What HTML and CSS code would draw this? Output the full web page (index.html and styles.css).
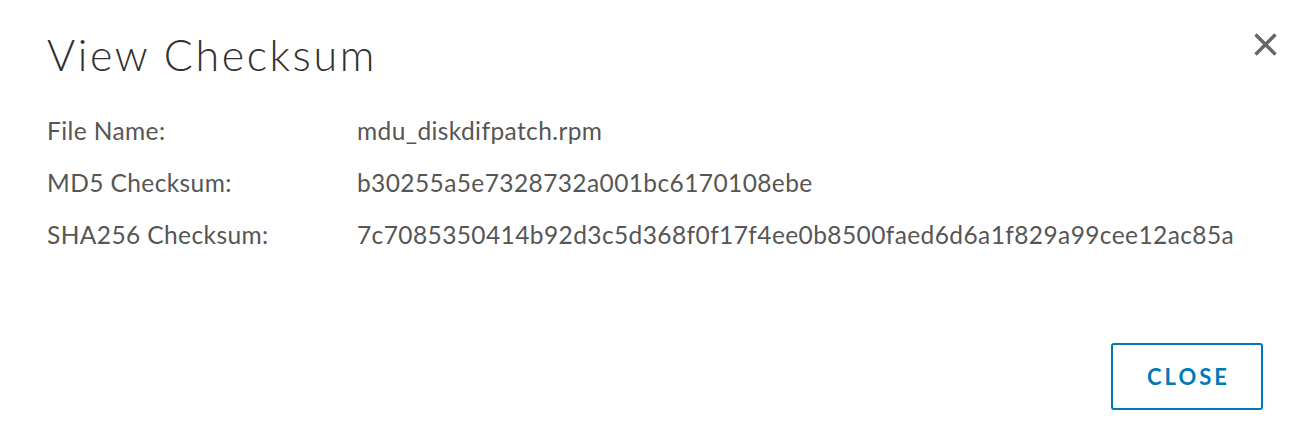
FILE: index.html
```html
<!DOCTYPE html>
<html lang="en">
  <head>
    <meta charset="UTF-8" />
    <title>View Checksum</title>
    <link rel="stylesheet" href="styles.css">
  </head>
  <body>
    <div class="modal">
      <!-- header -->
      <div class="modal-header">
        <h3 class="modal-title">View Checksum</h3>
        <button class="close-x" aria-label="Close">
          <svg width="25" height="25" viewBox="0 0 25 25">
            <path d="M2.5 2.5 L22.5 22.5 M22.5 2.5 L2.5 22.5" stroke="#666" stroke-width="3.4" stroke-linecap="butt" fill="none" />
          </svg>
        </button>
      </div>

      <!-- body -->
      <div class="modal-body">
        <div class="row">
          <span class="label">File Name:</span>
          <span class="value">mdu_diskdifpatch.rpm</span>
        </div>
        <div class="row">
          <span class="label">MD5 Checksum:</span>
          <span class="value">b30255a5e7328732a001bc6170108ebe</span>
        </div>
        <div class="row">
          <span class="label">SHA256 Checksum:</span>
          <span class="value">7c7085350414b92d3c5d368f0f17f4ee0b8500faed6d6a1f829a99cee12ac85a</span>
        </div>
      </div>

      <!-- footer -->
      <div class="modal-footer">
        <button class="btn-outline">CLOSE</button>
      </div>
    </div>
  </body>
</html>
```

FILE: styles.css
```css
body {
  margin: 0;
  background: #ffffff;
  font-family: Lato, "Noto Sans", sans-serif;
  color: #565656;
}

.modal {
  width: 1298px;
  height: 444px;
  box-sizing: border-box;
  padding: 24px 20px 0 47px;
  display: flex;
  flex-direction: column;
}

.modal-header {
  display: flex;
  justify-content: space-between;
  align-items: flex-start;
}

.modal-title {
  margin: 0;
  font-size: 43px;
  font-weight: 300;
  letter-spacing: 2.6px;
  color: #313131;
  line-height: 62px;
}

.close-x {
  background: none;
  border: none;
  padding: 0;
  margin-top: 8px;
  cursor: pointer;
  display: flex;
}

.modal-body {
  margin-top: 29px;
  display: flex;
  flex-direction: column;
  gap: 21px;
}

.row {
  display: grid;
  grid-template-columns: 310px 1fr;
  font-size: 24.5px;
  line-height: 31px;
  letter-spacing: 0.4px;
}

.modal-footer {
  margin-top: auto;
  margin-bottom: 34px;
  display: flex;
  justify-content: flex-end;
  padding-right: 15px;
}

.btn-outline {
  width: 152px;
  height: 67px;
  background: #ffffff;
  border: 2px solid #0079b8;
  border-radius: 3px;
  color: #0079b8;
  font-family: Lato, "Noto Sans", sans-serif;
  font-size: 22px;
  font-weight: 700;
  letter-spacing: 3px;
  padding: 0 0 0 3px;
  cursor: pointer;
}
```
